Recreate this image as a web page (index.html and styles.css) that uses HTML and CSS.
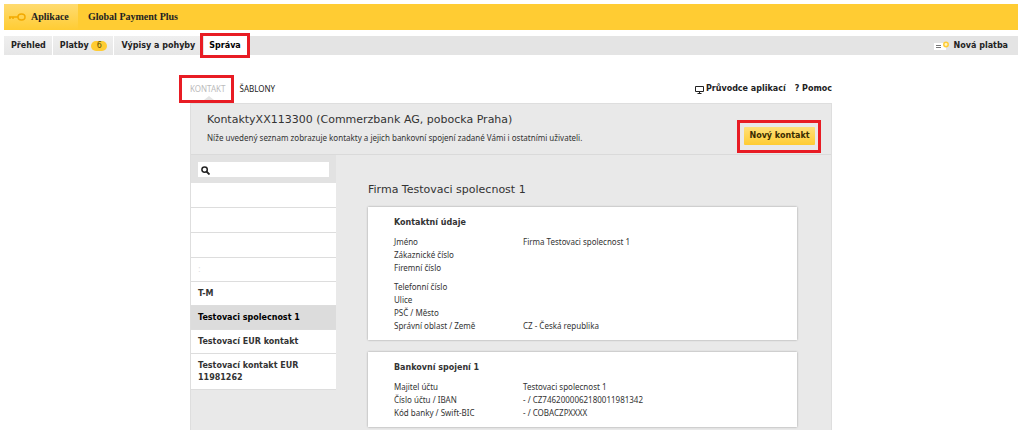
FILE: index.html
```html
<!DOCTYPE html>
<html lang="cs">
<head>
<meta charset="utf-8">
<title>Global Payment Plus</title>
<link rel="stylesheet" href="styles.css">
</head>
<body>
<header class="brand">
  <a class="brand-app" href="#">
    <svg class="key" viewBox="0 0 18 10" aria-hidden="true"><g fill="none" stroke="#f2a900" stroke-width="1.5"><ellipse cx="13.5" cy="5" rx="3.5" ry="3"/><path d="M10 5H1M2 5v2M5 5v2"/></g></svg>
    Aplikace
  </a>
  <span class="brand-name">Global Payment Plus</span>
</header>
<nav class="main-nav">
  <a class="tab" href="#">Přehled</a>
  <a class="tab tab-payments" href="#">Platby <span class="badge">6</span></a>
  <a class="tab tab-wide" href="#">Výpisy a pohyby</a>
  <a class="tab tab-active marked" href="#">Správa</a>
  <a class="new-payment" href="#">
    <svg class="card-icon" viewBox="0 0 17 10" aria-hidden="true"><path fill="#fff" d="M1 2h12v7H1z"/><path stroke="#777" d="M3 4.5h5M3 6.5h5"/><circle cx="13" cy="3.5" r="2.2" fill="#fff3c4" stroke="#fc3" stroke-width="1.5"/></svg>
    Nová platba
  </a>
</nav>
<div class="content">
  <div class="sub-nav">
    <a class="sub sub-active marked" href="#">KONTAKT</a>
    <a class="sub" href="#">ŠABLONY</a>
    <a class="help guide" href="#">
      <svg class="monitor" viewBox="0 0 9 9" aria-hidden="true"><path fill="none" stroke="#222" d="M.5 1.5h8v5h-8zM2.5 8.5h4M4.5 6.5v2"/></svg>
      Průvodce aplikací
    </a>
    <a class="help" href="#">? Pomoc</a>
  </div>
  <main class="panel">
    <div class="intro">
      <div>
        <h1 class="title">KontaktyXX113300 (Commerzbank AG, pobocka Praha)</h1>
        <p class="lead">Níže uvedený seznam zobrazuje kontakty a jejich bankovní spojení zadané Vámi i ostatními uživateli.</p>
      </div>
      <button class="new-contact marked" type="button">Nový kontakt</button>
    </div>
    <div class="columns">
      <aside class="sidebar">
        <div class="search">
          <svg class="lens" viewBox="0 0 9 9" aria-hidden="true"><circle cx="3.6" cy="3.6" r="2.7" fill="none" stroke="#222" stroke-width="1.5"/><path stroke="#222" stroke-width="1.8" d="M5.5 5.5l3 3"/></svg>
          <input class="search-input" type="text" aria-label="Hledat">
        </div>
        <ul class="contacts">
          <li class="contact contact-empty"></li>
          <li class="contact contact-empty"></li>
          <li class="contact contact-empty"></li>
          <li class="contact contact-faint">:</li>
          <li class="contact">T-M</li>
          <li class="contact contact-selected">Testovaci spolecnost 1</li>
          <li class="contact">Testovací EUR kontakt</li>
          <li class="contact">Testovací kontakt EUR 11981262</li>
        </ul>
      </aside>
      <section class="details">
        <h2 class="company">Firma Testovaci spolecnost 1</h2>
        <div class="card">
          <h3 class="card-title">Kontaktní údaje</h3>
          <dl class="fields">
            <dt>Jméno</dt><dd>Firma Testovaci spolecnost 1</dd>
            <dt>Zákaznické číslo</dt><dd></dd>
            <dt>Firemní číslo</dt><dd></dd>
          </dl>
          <dl class="fields">
            <dt>Telefonní číslo</dt><dd></dd>
            <dt>Ulice</dt><dd></dd>
            <dt>PSČ / Město</dt><dd></dd>
            <dt>Správní oblast / Země</dt><dd>CZ - Česká republika</dd>
          </dl>
        </div>
        <div class="card">
          <h3 class="card-title">Bankovní spojení 1</h3>
          <dl class="fields">
            <dt>Majitel účtu</dt><dd>Testovaci spolecnost 1</dd>
            <dt>Číslo účtu / IBAN</dt><dd>- / CZ7462000062180011981342</dd>
            <dt>Kód banky / Swift-BIC</dt><dd>- / COBACZPXXXX</dd>
          </dl>
        </div>
      </section>
    </div>
  </main>
</div>
</body>
</html>
```
FILE: styles.css
```css
* { box-sizing: border-box; }
body {
  margin: 0;
  padding: 4px 6px 0 4px;
  min-height: 100vh;
  display: flex;
  flex-direction: column;
  background: #fff;
  color: #333;
  font-family: "DejaVu Sans", Verdana, sans-serif;
  font-size: 8px;
  line-height: 13px;
}
a { color: inherit; text-decoration: none; }
h1, h2, h3, p, ul, dl, dd { margin: 0; padding: 0; }

.marked { position: relative; }
.marked::after {
  content: "";
  position: absolute;
  inset: -3px;
  border: 3px solid #e81c24;
}

.brand {
  display: flex;
  height: 26px;
  background: #fc3;
  color: #222;
  font: bold 10px/26px "Liberation Serif", "Times New Roman", serif;
}
.brand-app {
  display: flex;
  align-items: center;
  gap: 5px;
  width: 74px;
  padding-left: 4px;
  background: linear-gradient(#ffdb70, #fc3);
}
.brand-name { padding-left: 10px; }
.key { width: 18px; height: 10px; }

.main-nav {
  display: flex;
  height: 19px;
  margin-top: 6px;
  background: #e4e4e4;
  color: #222;
  font-weight: bold;
  line-height: 19px;
}
.tab {
  padding: 0 6px 0 7px;
  border-right: 1px solid #fff;
  background: linear-gradient(#efefef, #e6e6e6);
}
.tab-active { background: #fff; color: #000; padding: 0 5px; margin-left: 2px; }
.tab-active::after { inset: -3px -4px; }
.badge {
  display: inline-block;
  width: 16px;
  height: 10px;
  border-radius: 5px;
  background: #fc3;
  color: #665200;
  line-height: 10px;
  text-align: center;
  font-weight: normal;
}
.new-payment {
  display: flex;
  align-items: center;
  gap: 4px;
  margin-left: auto;
  padding-right: 10px;
}
.card-icon { width: 17px; height: 10px; }

.content {
  display: flex;
  flex-direction: column;
  flex: 1;
  width: 100%;
  max-width: 642px;
  margin: 20px auto 0;
}
.sub-nav {
  display: flex;
  height: 28px;
  line-height: 28px;
  color: #222;
}
.sub { margin-right: 14px; font-family: "Noto Sans", Tahoma, sans-serif; }
.sub-active { color: #bbb; }
.sub-active::before {
  content: "";
  position: absolute;
  left: 14px;
  bottom: 3px;
  border: 5px solid transparent;
  border-top: 0;
  border-bottom: 4px solid #e4e4e4;
}
.sub-active::after { inset: 0 -8px 0 -11px; }
.help { font-weight: bold; margin-left: 9px; }
.guide { display: flex; align-items: center; gap: 2px; margin-left: auto; }
.monitor { width: 9px; height: 9px; }

.panel {
  flex: 1;
  border: 1px solid #dedede;
  border-bottom: 0;
  background: #e9e9e9;
}
.intro {
  display: flex;
  justify-content: space-between;
  align-items: flex-end;
  height: 51px;
  padding: 8px 16px 9px;
  border-bottom: 1px solid #dadada;
}
.intro > div { align-self: flex-start; }
.title { font-size: 11px; font-weight: normal; line-height: 16px; }
.lead { margin-top: 3px; }
.lead, .fields { font-family: "Noto Sans", Verdana, sans-serif; }
.new-contact {
  width: 71px;
  height: 18px;
  padding: 0;
  border: 0;
  border-radius: 1px;
  background: linear-gradient(#ffe07a, #fc3);
  color: #3a2c00;
  font: bold 8px/18px "DejaVu Sans", Verdana, sans-serif;
}
.new-contact::after { inset: -7px -6px -8px -7px; }

.columns { display: flex; align-items: flex-start; }
.sidebar { width: 145px; }
.search { position: relative; padding: 7px 7px 6px; background: #e2e2e2; }
.search-input {
  display: block;
  width: 100%;
  height: 15px;
  padding: 0 4px 0 16px;
  border: 0;
  background: #fff;
  font: inherit;
}
.lens { position: absolute; left: 10px; top: 11px; width: 9px; height: 9px; }
.contacts { list-style: none; font-weight: bold; line-height: 12px; }
.contact {
  padding: 6px 7px 5px;
  border-bottom: 1px solid #ddd;
  background: #fff;
}
.contact-empty { height: 25px; }
.contact-faint { color: #ddd; font-weight: normal; }
.contact-selected { background: #dcdcdc; color: #000; }

.details {
  display: flex;
  flex-direction: column;
  gap: 12px;
  flex: 1;
  padding: 27px 34px 3px 32px;
}
.company { font-size: 11px; font-weight: normal; line-height: 16px; margin-bottom: -3px; }
.card {
  padding: 9px 26px 8px;
  background: #fff;
  box-shadow: 0 0 2px #999;
}
.card-title { font-size: 8px; line-height: 13px; }
.fields {
  display: grid;
  grid-template-columns: 129px 1fr;
  grid-auto-rows: 13px;
  margin-top: 6px;
}
```
